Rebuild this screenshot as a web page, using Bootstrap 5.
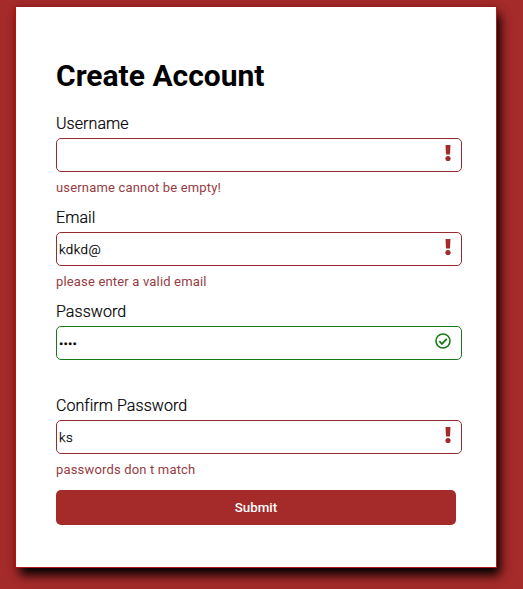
<!DOCTYPE html>
<html lang="en">
<head>
<meta charset="utf-8">
<meta name="viewport" content="width=device-width, initial-scale=1">
<title>Create Account</title>
<link href="https://cdn.jsdelivr.net/npm/bootstrap@5.3.0/dist/css/bootstrap.min.css" rel="stylesheet">
<style>
body { background: brown; color: #000; font-family: Roboto, sans-serif; height: 589px; overflow: hidden; }
.signup { width: 480px; height: 560px; margin: 7px 0 0 16px; padding: 49px 34px 0 40px; box-shadow: 1px 1px 0 0 #b01c1c, -1px 0 1px 0 #cc0808, 4px 8px 10px 0 #000, 0 0 6px 0 rgba(90, 20, 20, .5); }
.signup h1 { font-size: 30px; font-weight: 700; line-height: 40px; margin-bottom: 15px; }
.signup-field { height: 94px; }
.signup-field label { display: block; font-size: 16px; font-weight: 300; line-height: 20px; height: 27px; padding-top: 3px; letter-spacing: .06px; -webkit-text-stroke: .2px #000; }
.signup .form-control { height: 34px; border: 1px solid #962a32; border-radius: 5px; padding: 1px 2px; font-size: 13.33px; font-weight: 300; -webkit-text-stroke: .25px #000; color: #000; background: #fff; box-shadow: none; letter-spacing: .45px; }
.signup .form-control.valid { border-color: #1a7a1a; letter-spacing: .2px; }
.signup-error { color: #963c42; font-size: 13px; line-height: 16px; margin-top: 8px; letter-spacing: .17px; font-weight: 400; }
.state-icon { position: absolute; right: 11px; top: 6px; }
.signup .btn { width: 400px; height: 35px; margin-top: 3px; background: brown; color: #fff; border: 0; border-radius: 5px; font-size: 13.33px; font-weight: 500; padding: 0; }
</style>
</head>
<body>
<form class="signup bg-white" novalidate>
  <h1>Create Account</h1>
  <div class="signup-field">
    <label for="username">Username</label>
    <div class="position-relative">
      <input id="username" class="form-control" type="text">
      <svg class="state-icon" width="6" height="18" viewBox="0 0 6 18" fill="brown"><path d="M.5 1h5l-.5 9.5H1z"/><circle cx="3" cy="14.5" r="2.6"/></svg>
    </div>
    <div class="signup-error">username cannot be empty!</div>
  </div>
  <div class="signup-field">
    <label for="email">Email</label>
    <div class="position-relative">
      <input id="email" class="form-control" type="text" value="kdkd@">
      <svg class="state-icon" width="6" height="18" viewBox="0 0 6 18" fill="brown"><path d="M.5 1h5l-.5 9.5H1z"/><circle cx="3" cy="14.5" r="2.6"/></svg>
    </div>
    <div class="signup-error">please enter a valid email</div>
  </div>
  <div class="signup-field">
    <label for="password">Password</label>
    <div class="position-relative">
      <input id="password" class="form-control valid" type="password" value="kdkd">
      <svg class="state-icon" width="16" height="18" viewBox="0 0 16 18" fill="none" stroke="#1a7a1a" stroke-width="1.6"><circle cx="8" cy="9" r="7"/><path d="M4.3 9.2l2.6 2.6 4.9-4.9" stroke-width="1.9"/></svg>
    </div>
  </div>
  <div class="signup-field">
    <label for="confirm">Confirm Password</label>
    <div class="position-relative">
      <input id="confirm" class="form-control" type="text" value="ks">
      <svg class="state-icon" width="6" height="18" viewBox="0 0 6 18" fill="brown"><path d="M.5 1h5l-.5 9.5H1z"/><circle cx="3" cy="14.5" r="2.6"/></svg>
    </div>
    <div class="signup-error">passwords don t match</div>
  </div>
  <button class="btn d-block" type="button">Submit</button>
</form>
<script src="https://cdn.jsdelivr.net/npm/bootstrap@5.3.0/dist/js/bootstrap.bundle.min.js"></script>
</body>
</html>
